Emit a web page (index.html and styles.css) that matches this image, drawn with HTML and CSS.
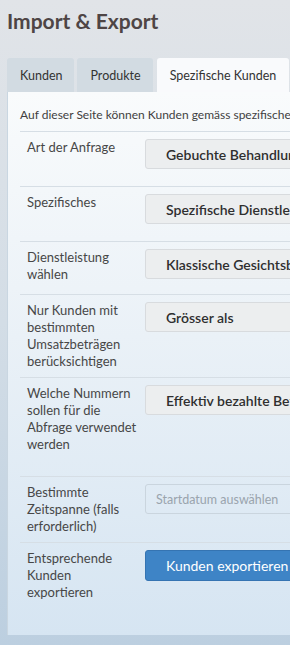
FILE: index.html
```html
<!DOCTYPE html>
<html lang="de">
<head>
    <meta charset="UTF-8">
    <meta name="viewport" content="width=device-width, initial-scale=1.0">
    <title>Import &amp; Export</title>
    <link rel="stylesheet" href="styles.css">
</head>
<body>
    <h1 class="page-title">Import &amp; Export</h1>

    <!-- Reiter -->
    <div class="tabs">
        <div class="tab">Kunden</div>
        <div class="tab">Produkte</div>
        <div class="tab tab-active">Spezifische Kunden</div>
    </div>

    <div class="panel">
        <p class="intro">Auf dieser Seite können Kunden gemäss spezifischen Kriterien exportiert werden.</p>

        <div class="form-row">
            <div class="form-label">Art der Anfrage</div>
            <div class="form-control"><div class="select">Gebuchte Behandlungen</div></div>
        </div>

        <div class="form-row">
            <div class="form-label">Spezifisches</div>
            <div class="form-control"><div class="select">Spezifische Dienstleistung</div></div>
        </div>

        <div class="form-row form-row-short">
            <div class="form-label">Dienstleistung wählen</div>
            <div class="form-control"><div class="select">Klassische Gesichtsbehandlung</div></div>
        </div>

        <div class="form-row">
            <div class="form-label">Nur Kunden mit bestimmten Umsatzbeträgen berücksichtigen</div>
            <div class="form-control"><div class="select">Grösser als</div></div>
        </div>

        <div class="form-row form-row-tall">
            <div class="form-label">Welche Nummern sollen für die Abfrage verwendet werden</div>
            <div class="form-control"><div class="select">Effektiv bezahlte Beträge</div></div>
        </div>

        <div class="form-row">
            <div class="form-label">Bestimmte Zeitspanne (falls erforderlich)</div>
            <div class="form-control"><input class="date-input" type="text" placeholder="Startdatum auswählen"></div>
        </div>

        <div class="form-row">
            <div class="form-label">Entsprechende Kunden exportieren</div>
            <div class="form-control"><button class="export-button">Kunden exportieren</button></div>
        </div>
    </div>
</body>
</html>
```

FILE: styles.css
```css
/* Allgemein */
body {
    margin: 0;
    width: 290px;
    height: 645px;
    overflow: hidden;
    font-family: 'Lato', 'Open Sans', sans-serif;
    color: #474747;
    background: linear-gradient(to bottom, #e1e4e8 0%, #d3dde6 50%, #bccfe0 100%);
}

.page-title {
    margin: 0;
    padding: 9px 7px 0;
    height: 49px;
    box-sizing: border-box;
    font-size: 21px;
    line-height: 24px;
    font-weight: 700;
    color: #4e4545;
}

/* Reiter */
.tabs {
    display: flex;
    gap: 3px;
    margin-left: 7px;
    margin-top: 9px;
    width: 400px;
}

.tab {
    flex-shrink: 0;
    height: 34px;
    padding: 0 12px 0 13px;
    display: flex;
    align-items: center;
    font-size: 12.5px;
    color: #333;
    background-color: #d2dbe2;
    border-radius: 3px 3px 0 0;
    white-space: nowrap;
}

.tab-active {
    margin-left: 1px;
    padding: 0 13px;
    background-color: #f9fafc;
}

/* Inhalt */
.panel {
    margin-left: 7px;
    width: 360px;
    height: 543px;
    padding: 0 0 0 12px;
    box-sizing: border-box;
    background: linear-gradient(to bottom, #f9fbfc 0%, #eaf1f7 45%, #d6e5f2 100%);
    border-left: 1px solid #c9d6e1;
}

.intro {
    margin: 0;
    padding: 14px 0 0 0;
    height: 39px;
    box-sizing: border-box;
    font-size: 12px;
    line-height: 17px;
    white-space: nowrap;
    color: #3f3f3f;
}

.form-row {
    display: flex;
    border-top: 1px solid #d6dee5;
    padding: 7px 0;
    min-height: 40px;
}

.form-row-short {
    min-height: 38px;
}

.form-row-tall {
    min-height: 84px;
}

.form-label {
    flex-shrink: 0;
    width: 111px;
    padding-left: 7px;
    margin-right: 7px;
    font-size: 13px;
    line-height: 17px;
    color: #474747;
}

.form-control {
    flex: 1;
    min-width: 0;
}

.select {
    height: 30px;
    box-sizing: border-box;
    padding: 0 20px;
    display: flex;
    align-items: center;
    font-size: 14px;
    font-weight: 600;
    color: #2f2f2f;
    white-space: nowrap;
    overflow: hidden;
    background-color: #eceeef;
    border: 1px solid #d8dbde;
    border-radius: 3px;
}

.date-input {
    width: 100%;
    height: 30px;
    box-sizing: border-box;
    padding: 0 10px;
    font-family: inherit;
    font-size: 12.5px;
    color: #333;
    background-color: transparent;
    border: 1px solid #cad5de;
    border-radius: 3px;
}

.date-input::placeholder {
    color: #9aa4ad;
}

.export-button {
    height: 31px;
    padding: 0 20px;
    font-family: inherit;
    font-size: 14px;
    color: #fff;
    background-color: #3e84c6;
    border: 1px solid #3574b2;
    border-radius: 3px;
    white-space: nowrap;
}
```
